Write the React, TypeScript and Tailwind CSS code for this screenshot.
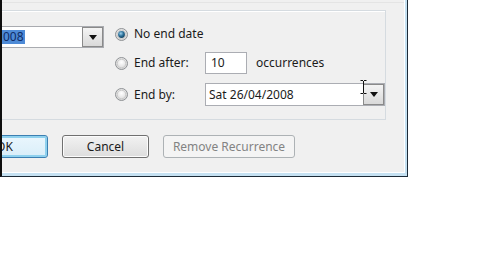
import React from "react";

const font = { fontFamily: '"Segoe UI", "Noto Sans", "Open Sans", sans-serif' };

function Radio({ checked }: { checked?: boolean }) {
  return (
    <svg width="13" height="13" viewBox="0 0 13 13" className="shrink-0">
      <defs>
        <radialGradient id="rg" cx="50%" cy="40%" r="60%">
          <stop offset="0%" stopColor="#ffffff" />
          <stop offset="100%" stopColor="#d4d4d4" />
        </radialGradient>
        <radialGradient id="dot" cx="40%" cy="35%" r="70%">
          <stop offset="0%" stopColor="#9fd2ee" />
          <stop offset="55%" stopColor="#2a6f98" />
          <stop offset="100%" stopColor="#123e5a" />
        </radialGradient>
      </defs>
      <circle cx="6.5" cy="6.5" r="6" fill="url(#rg)" stroke="#8f9295" strokeWidth="1" />
      <circle cx="6.5" cy="6.5" r="4.3" fill="none" stroke="#c9c9c9" strokeWidth="1" />
      {checked && <circle cx="6.5" cy="6.5" r="3.4" fill="url(#dot)" />}
    </svg>
  );
}

function DropBtn() {
  return (
    <div className="w-[21px] h-full border border-[#8a8a8a] bg-gradient-to-b from-[#f4f4f4] to-[#d9d9d9] flex items-center justify-center">
      <svg width="8" height="5" viewBox="0 0 8 5">
        <path d="M0 0 H8 L4 5 Z" fill="#111" />
      </svg>
    </div>
  );
}

export default function App() {
  return (
    <div className="w-[480px] h-[270px] bg-white overflow-hidden flex items-start text-[12px] text-[#1b1b1b]" style={font}>
      <div className="w-[408px] h-[177px] shrink-0 border-l-2 border-l-[#0e0e0e] border-r border-b border-r-[#1d2b38] border-b-[#1d2b38] bg-[#c5e1f2]">
        <div className="w-[403px] h-[173px] bg-[#f0f0f0] border-r border-b border-[#ffffff] flex flex-col overflow-hidden">
          <div className="h-[3px] border-b border-[#e4e4e4]" />
          {/* group box */}
          <div className="mt-[7px] w-[384px] h-[110px] border-t border-r border-b border-[#d5dbe0] shadow-[inset_0_1px_0_#ffffff] flex">
            {/* left combo */}
            <div className="w-[102px] pt-[15px] shrink-0">
              <div className="h-[22px] w-[102px] flex border border-[#a9abb0] border-l-0 bg-white">
                <div className="flex-1 flex items-center overflow-hidden">
                  <span className="bg-[#4d8ad6] text-[#0f2b66] leading-[14px] px-[1px]">008</span>
                </div>
                <DropBtn />
              </div>
            </div>
            {/* right column */}
            <div className="ml-[11px] pt-[12px] flex flex-col">
              <div className="h-[22px] flex items-center gap-[6px]">
                <Radio checked />
                <span>No end date</span>
              </div>
              <div className="mt-[7px] h-[22px] flex items-center">
                <Radio />
                <span className="ml-[6px] w-[71px]">End after:</span>
                <div className="w-[42px] h-[22px] border border-[#abadb3] bg-white flex items-center pl-[5px]">10</div>
                <span className="ml-[9px]">occurrences</span>
              </div>
              <div className="mt-[9px] h-[23px] flex items-center">
                <Radio />
                <span className="ml-[6px] w-[71px]">End by:</span>
                <div className="relative w-[180px] h-[23px] flex border border-[#abadb3] bg-white">
                  <div className="flex-1 flex items-center pl-[3px]">Sat 26/04/2008</div>
                  <DropBtn />
                  <svg className="absolute left-[154px] top-[-4px]" width="7" height="14" viewBox="0 0 7 14">
                    <path d="M0.5 0.5 H3 M4 0.5 H6.5 M3.5 1 V13 M0.5 13.5 H3 M4 13.5 H6.5" stroke="#111" strokeWidth="1" fill="none" />
                  </svg>
                </div>
              </div>
            </div>
          </div>
          {/* buttons */}
          <div className="mt-[15px] flex gap-[14px] ml-[-41px]">
            <div className="w-[87px] h-[23px] rounded-[3px] border border-[#3c7fb1] shadow-[inset_0_0_0_2px_#8fd1ee] bg-gradient-to-b from-[#eaf6fd] to-[#d9eef9] flex items-center justify-center">OK</div>
            <div className="w-[87px] h-[23px] rounded-[3px] border border-[#707070] shadow-[inset_0_0_0_1px_#fcfcfc] bg-gradient-to-b from-[#f2f2f2] to-[#dddddd] flex items-center justify-center">Cancel</div>
            <div className="w-[132px] h-[23px] rounded-[3px] border border-[#adb2b5] bg-[#f4f4f4] text-[#838383] flex items-center justify-center">Remove Recurrence</div>
          </div>
        </div>
      </div>
    </div>
  );
}
